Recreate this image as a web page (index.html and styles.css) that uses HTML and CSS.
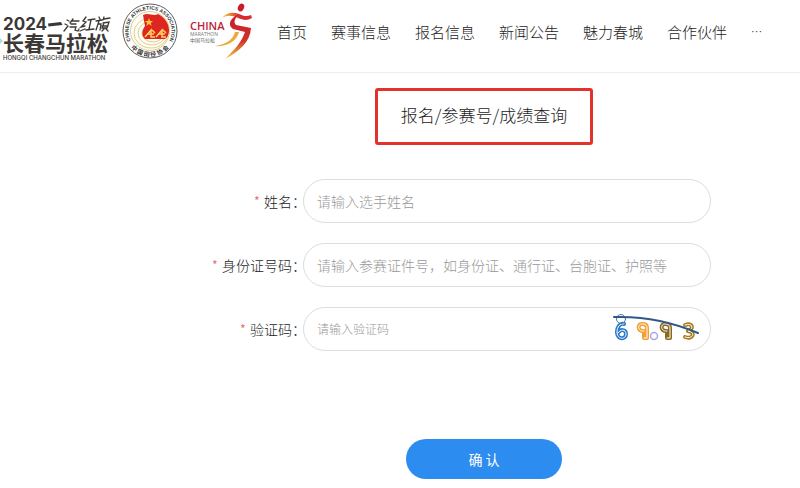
FILE: index.html
```html
<!DOCTYPE html>
<html lang="zh-CN">
<head>
<meta charset="utf-8">
<meta name="viewport" content="width=device-width, initial-scale=1">
<title>长春马拉松 - 查询</title>
<link rel="stylesheet" href="styles.css">
</head>
<body>
<header class="header">
  <svg class="logo-event" viewBox="0 0 114 60" role="img" aria-label="2024一汽红旗长春马拉松">
    <path d="M0 36l3 3-3 3z" fill="#a9dce6"/>
    <g fill="#3c3836">
      <text x="3" y="28" class="logo-year">2024</text>
      <path d="M48 21.500l13-1.500 1.500 3-14 1.500z"/>
      <g class="logo-brush">
        <path d="M67 18l2 1M65 22l2 1M64 29l4-5M73 17l-3 4M72 19h7M71 22h5M70 25h6l-1 3 3 1 1-2"/>
        <path d="M86 15l-3 4 3 1-5 5 4-1M80 29l5-2M88 18l7-1M91 18l-2 9M86 28l8-1"/>
        <path d="M99 15l1 2M96 19l6-1M99 19l-3 9M98 22h3l-1 6M104 15l-1 3M104 17l6-1M103 21l6-1-2 6h-5l2-5M102 24h6M102 29l2-2M106 27l2 2"/>
      </g>
      <text x="3" y="49" class="logo-name">长春马拉松</text>
      <text x="3" y="58" class="logo-latin">HONGQI CHANGCHUN MARATHON</text>
    </g>
  </svg>
  <svg class="logo-seal" viewBox="0 0 56 56" role="img" aria-label="中国田径协会">
    <defs>
      <path id="seal-top" d="M11.200 41.500A21.500 21.500 0 1 1 44.800 41.500"/>
      <path id="seal-bottom" d="M3 33A25.500 25.500 0 0 0 53 33"/>
    </defs>
    <circle cx="28" cy="28" r="27" fill="#fff" stroke="#5f605d"/>
    <circle cx="28" cy="28" r="19.500" fill="#fffdf4" stroke="#dccf91"/>
    <g fill="none" stroke="#dccf91">
      <ellipse cx="29" cy="30" rx="17" ry="15"/>
      <ellipse cx="30" cy="30" rx="14" ry="12"/>
      <ellipse cx="31" cy="30" rx="11" ry="9"/>
    </g>
    <path d="M21 12c6-3 10 2 15-1 6 3 11 9 11 16 0 5-2 8-4 9H23c-4-4-3-8 0-13z" fill="#df251f"/>
    <path d="M27 15l1 3h3l-2.200 2 .8 3-2.600-2-2.600 2 .8-3-2.200-2h3z" fill="#ffc83a"/>
    <path d="M23 34l6-7v7h4M26 31h6M34 34l6-7v7h4M37 31h6M30 27l3 3M41 27l3 3" fill="none" stroke="#ffd166" stroke-width="1.500"/>
    <text class="seal-latin"><textPath href="#seal-top" startOffset="50%">CHINESE ATHLETICS ASSOCIATION</textPath></text>
    <text class="seal-cjk"><textPath href="#seal-bottom" startOffset="50%">中 国 田 径 协 会</textPath></text>
  </svg>
  <svg class="logo-china" viewBox="0 0 64 60" role="img" aria-label="China Marathon 中国马拉松">
    <defs>
      <linearGradient id="leg" x1="0" y1="0" x2="0" y2="1">
        <stop offset="0" stop-color="#c9192d"/>
        <stop offset=".6" stop-color="#cf3428"/>
        <stop offset="1" stop-color="#f2cf45"/>
      </linearGradient>
      <linearGradient id="arm" x1="0" y1="0" x2="1" y2="0">
        <stop offset="0" stop-color="#f4cf43"/>
        <stop offset=".6" stop-color="#d92b2b"/>
      </linearGradient>
    </defs>
    <text x="0" y="28" class="china-title">CHINA</text>
    <text x="0" y="34" class="china-sub">MARATHON</text>
    <text x="0" y="40" class="china-cjk">中国马拉松</text>
    <ellipse cx="51" cy="5.500" rx="3" ry="4" transform="rotate(25 51 5.500)" fill="#c91d2d"/>
    <path d="M32 16c5-6 11-6 17-4 4 2 8 3 12 1l1 3c-5 3-9 2-14 0-6-3-11-3-16 0z" fill="url(#arm)"/>
    <path d="M49 12c-4 4-6 8-3 11l15 3c-1 14-11 23-26 31 10-10 16-16 20-27l-12-3c-6-4-3-11 6-15z" fill="url(#leg)"/>
    <path d="M45 30c-2 8-10 13-21 14 11 1 22-3 25-14z" fill="#ecab39"/>
  </svg>
  <nav class="nav" aria-label="主导航">
    <a href="#">首页</a>
    <a href="#">赛事信息</a>
    <a href="#">报名信息</a>
    <a href="#">新闻公告</a>
    <a href="#">魅力春城</a>
    <a href="#">合作伙伴</a>
    <a href="#" class="nav-more" aria-label="更多">···</a>
  </nav>
</header>
<main>
  <div class="centered">
    <h1 class="title">报名/参赛号/成绩查询</h1>
  </div>
  <form class="form">
    <label for="name"><span class="required">*</span>姓名：</label>
    <input class="field" id="name" type="text" placeholder="请输入选手姓名">
    <label for="idno"><span class="required">*</span>身份证号码：</label>
    <input class="field" id="idno" type="text" placeholder="请输入参赛证件号，如身份证、通行证、台胞证、护照等">
    <label for="code"><span class="required">*</span>验证码：</label>
    <div class="field code-field">
      <input id="code" type="text" placeholder="请输入验证码">
      <svg class="captcha" viewBox="0 0 90 32" role="img" aria-label="验证码图片">
        <g fill="none" stroke-linejoin="round" stroke-linecap="round">
          <g stroke-width="4">
            <path stroke="#2878c8" d="M12 11c-4-1-7 3-7 8 0 8 9 8 9 2 0-5-6-5-8-1"/>
            <path stroke="#f3a02f" d="M32 18c-7 1-7-8-1-7 3 0 4 2 4 4v10h-3v-7"/>
            <path stroke="#8b6820" d="M55 18c-7 1-7-8-1-7 3 0 4 2 4 4v10h-3v-7"/>
            <path stroke="#a77a20" d="M73 12c8-3 9 4 3 6 8 1 5 9-3 6"/>
          </g>
          <g stroke="#fff" stroke-width="1">
            <path d="M12 11c-4-1-7 3-7 8 0 8 9 8 9 2 0-5-6-5-8-1"/>
            <path d="M32 18c-7 1-7-8-1-7 3 0 4 2 4 4v10h-3"/>
            <path d="M55 18c-7 1-7-8-1-7 3 0 4 2 4 4v10h-3"/>
            <path d="M73 12c8-3 9 4 3 6 8 1 5 9-3 6"/>
          </g>
          <circle cx="9" cy="6" r="4.500" stroke="#4d78ab"/>
          <circle cx="42" cy="23" r="3.500" stroke="#b4a3e8" stroke-width="1.500"/>
          <path d="M2 4c30-1 56 4 84 16" stroke="#315985" stroke-width="2"/>
        </g>
      </svg>
    </div>
  </form>
  <div class="centered">
    <button class="submit" type="button">确 认</button>
  </div>
</main>
</body>
</html>
```
FILE: styles.css
```css
* {
  box-sizing: border-box;
}

body {
  margin: 0;
  background: #fff;
  color: #1c1c1c;
  font: 14px/20px "Noto Sans CJK SC", sans-serif;
  font-weight: 300;
}

.header {
  display: flex;
  align-items: flex-start;
  height: 73px;
  padding-top: 2px;
  border-bottom: 1px solid #eee;
}

.header svg {
  flex: none;
}

.logo-event {
  width: 114px;
  height: 60px;
}

.logo-year {
  font: 700 17px Inter, sans-serif;
}

.logo-brush {
  fill: none;
  stroke: #3c3836;
  stroke-width: 1.3;
  stroke-linecap: round;
}

.logo-name {
  font: 700 21px "Noto Sans CJK SC", sans-serif;
}

.logo-latin {
  font: 500 6px Inter, sans-serif;
}

.logo-seal {
  width: 56px;
  height: 56px;
  margin: 1px 0 0 8px;
}

.seal-latin {
  font: 700 5px "Liberation Sans", sans-serif;
  fill: #333;
  text-anchor: middle;
}

.seal-cjk {
  font: 700 6px "Noto Sans CJK SC", sans-serif;
  fill: #333;
  text-anchor: middle;
}

.logo-china {
  width: 64px;
  height: 60px;
  margin-left: 12px;
}

.china-title {
  font: 600 11px "Open Sans", sans-serif;
  fill: #bd2338;
}

.china-sub {
  font: 400 5px "Open Sans", sans-serif;
  fill: #777;
}

.china-cjk {
  font: 400 5px "Noto Sans CJK SC", sans-serif;
  fill: #666;
}

.nav {
  display: flex;
  gap: 24px;
  margin: 20px 0 0 23px;
  white-space: nowrap;
}

.nav a {
  color: #1c1c1c;
  font-size: 15px;
  text-decoration: none;
}

.nav .nav-more {
  font-family: Roboto, sans-serif;
}

.centered {
  display: flex;
  justify-content: center;
  margin-left: 21%;
}

.title {
  margin: 15px 0 34px;
  padding: 12px 23px 15px;
  border: 3px solid #e3322d;
  border-radius: 3px;
  font-size: 17px;
  font-weight: 300;
  line-height: 24px;
}

.form {
  display: grid;
  grid-template-columns: 303px 1fr;
  gap: 20px 0;
  align-items: center;
  padding-right: 89px;
}

.form label {
  margin-right: -3px;
  text-align: right;
}

.required {
  margin-right: 4px;
  color: #e85a5a;
}

.field {
  width: 100%;
  height: 44px;
  padding: 0 13px;
  border: 1px solid #ddd;
  border-radius: 22px;
  background: #fff;
  color: #1c1c1c;
  font: inherit;
}

.code-field {
  display: flex;
  align-items: center;
  padding-right: 8px;
}

.code-field input {
  flex: 1;
  min-width: 0;
  padding: 0;
  border: 0;
  font: inherit;
  font-size: 12px;
}

input::placeholder {
  color: #999;
  opacity: 1;
}

.captcha {
  width: 90px;
  height: 32px;
}

.submit {
  width: 156px;
  height: 40px;
  margin-top: 88px;
  padding: 0;
  border: 0;
  border-radius: 20px;
  background: #2d8cf0;
  color: #fff;
  font: inherit;
  font-weight: 400;
}
```
